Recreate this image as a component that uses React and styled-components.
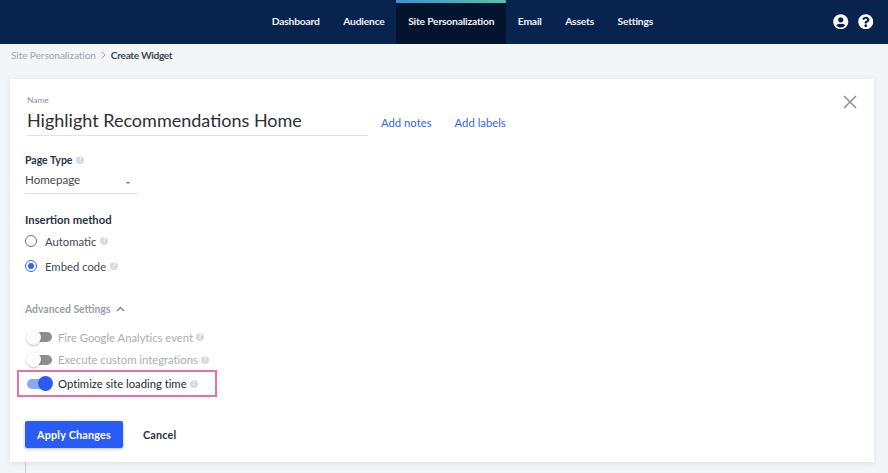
import React from 'react';
import styled, { createGlobalStyle } from 'styled-components';
import { FaUserCircle, FaQuestionCircle } from 'react-icons/fa';

const GlobalStyle = createGlobalStyle`
  html, body {
    margin: 0;
    padding: 0;
    height: 473px;
    overflow: hidden;
    background: #f3f6f9;
    font-family: "Lato", "Liberation Sans", sans-serif;
  }
`;

const Page = styled.div`
  width: 888px;
  height: 473px;
  display: flex;
  flex-direction: column;
  overflow: hidden;
`;

const TopBar = styled.header`
  height: 44px;
  flex: none;
  display: flex;
  align-items: stretch;
  justify-content: space-between;
  background: #08234d;
  padding: 0 15px 0 260px;
  box-sizing: border-box;
`;

const Nav = styled.nav`
  display: flex;
`;

const NavItem = styled.a`
  display: flex;
  align-items: center;
  padding: 0 11.75px 6px;
  box-sizing: border-box;
  font-size: 10.3px;
  font-weight: 700;
  letter-spacing: -0.2px;
  color: #eef1f5;
  border-top: 3px solid transparent;
  background: ${p => (p.$active ? 'linear-gradient(90deg, #3f8fd0, #5cc0a8) top / 100% 3px no-repeat, #03142f' : 'transparent')};
  background-origin: border-box;
  background-clip: border-box;
`;

const IconRow = styled.div`
  display: flex;
  align-items: center;
  gap: 9px;
  padding-bottom: 1px;
  color: #fff;
  font-size: 15.5px;
`;

const Crumbs = styled.div`
  height: 35px;
  flex: none;
  box-sizing: border-box;
  display: flex;
  align-items: center;
  gap: 4px;
  padding: 0 0 13px 11px;
  font-size: 10.2px;
  font-weight: 500;
  letter-spacing: -0.15px;
  color: #a5abb1;
`;

const CrumbSep = styled.svg`
  width: 7px;
  height: 8px;
`;

const CrumbCurrent = styled.span`
  color: #42484e;
  font-weight: 700;
  letter-spacing: -0.35px;
`;

const Card = styled.main`
  flex: none;
  position: relative;
  margin-left: 10px;
  width: 864px;
  height: 383px;
  box-sizing: border-box;
  padding: 16px 0 0 15px;
  background: #fff;
  box-shadow: 0 1px 6px rgba(40, 60, 90, 0.12);
`;

const TrailLine = styled.div`
  width: 1px;
  flex: 1;
  margin-left: 25px;
  background: #c9ced3;
`;

const CloseButton = styled.button`
  position: absolute;
  top: 15px;
  right: 16px;
  width: 16px;
  height: 16px;
  padding: 0;
  border: 0;
  background: none;
  display: flex;
`;

const NameLabel = styled.div`
  font-size: 8.4px;
  color: #8d9399;
  margin-left: 2px;
  height: 10px;
  line-height: 10px;
`;

const NameRow = styled.div`
  display: flex;
  align-items: flex-end;
  gap: 13px;
  margin-top: 2px;
`;

const NameInput = styled.div`
  width: 341px;
  height: 29px;
  margin-left: 2px;
  line-height: 27px;
  box-sizing: border-box;
  border-bottom: 1px solid #e3e1da;
  font-size: 18px;
  color: #2c3034;
`;

const Links = styled.div`
  display: flex;
  gap: 23px;
  padding-bottom: 6px;
`;

const TextLink = styled.a`
  font-size: 11.3px;
  line-height: 14px;
  color: #2f66f2;
`;

const FieldLabel = styled.div`
  display: flex;
  align-items: center;
  gap: 4px;
  height: 14px;
  font-size: ${p => p.$size}px;
  font-weight: 700;
  color: #27333f;
  margin-top: ${p => p.$top}px;
`;

const Hint = styled.span`
  display: inline-flex;
  align-items: center;
  justify-content: center;
  width: 8px;
  height: 8px;
  border-radius: 50%;
  background: #d8dbde;
  color: #fff;
  font-size: 6.5px;
  font-weight: 700;
  line-height: 1;
  margin-left: ${p => p.$gap}px;
`;

const Select = styled.div`
  width: 113px;
  height: 25px;
  margin-top: 2px;
  box-sizing: border-box;
  border-bottom: 1px solid #e3e1da;
  display: flex;
  align-items: center;
  justify-content: space-between;
  padding: 0 8px 3px 0;
  font-size: 11.6px;
  color: #434a50;
`;

const Caret = styled.span`
  width: 0;
  height: 0;
  margin-top: 6px;
  border-left: 2px solid transparent;
  border-right: 2px solid transparent;
  border-top: 2px solid #666c72;
`;

const RadioRow = styled.label`
  display: flex;
  align-items: center;
  gap: 8px;
  height: 16px;
  margin-top: ${p => p.$top}px;
  font-size: 11.3px;
  color: #434a50;
`;

const RadioDot = styled.span`
  width: 12px;
  height: 12px;
  box-sizing: border-box;
  border-radius: 50%;
  border: 1.3px solid ${p => (p.$on ? '#2f66f2' : '#6f7479')};
  display: flex;
  align-items: center;
  justify-content: center;
  &::after {
    content: '';
    width: 6px;
    height: 6px;
    border-radius: 50%;
    background: ${p => (p.$on ? '#2f66f2' : 'transparent')};
  }
`;

const Advanced = styled.div`
  display: flex;
  align-items: center;
  gap: 5px;
  height: 14px;
  margin-top: 28px;
  font-size: 10.4px;
  font-weight: 700;
  color: #9aa0a6;
`;

const ToggleList = styled.div`
  display: flex;
  flex-direction: column;
  margin-top: 10px;
`;

const ToggleRow = styled.div`
  display: flex;
  align-items: center;
  gap: 6px;
  height: 22.5px;
  font-size: 11.3px;
  letter-spacing: -0.02px;
  color: ${p => (p.$on ? '#24292e' : '#a9aeb3')};
  padding-left: 1px;
`;

const HighlightedRow = styled(ToggleRow)`
  width: 200px;
  height: 27px;
  margin: -1px 0 0 -8px;
  box-sizing: border-box;
  border: 2px solid #ec6fa2;
  padding-left: 7px;
`;

const Track = styled.span`
  position: relative;
  width: 25px;
  height: 10px;
  margin-left: 1px;
  border-radius: 5px;
  background: ${p => (p.$on ? '#8aa8f8' : '#8e8e8e')};
`;

const Knob = styled.span`
  position: absolute;
  top: -2.5px;
  left: ${p => (p.$on ? '11px' : '-1px')};
  width: 15px;
  height: 15px;
  border-radius: 50%;
  background: ${p => (p.$on ? '#2a5cf5' : '#fbfbfb')};
  box-shadow: ${p => (p.$on ? 'none' : '0 1px 2px rgba(0, 0, 0, 0.25)')};
`;

const Actions = styled.div`
  display: flex;
  align-items: center;
  gap: 20px;
  margin-top: 24px;
`;

const PrimaryButton = styled.button`
  width: 98px;
  height: 27px;
  border: 0;
  border-radius: 2px;
  background: #2a5cf5;
  color: #fff;
  font: 700 10.8px "Lato", sans-serif;
  letter-spacing: 0.2px;
  box-shadow: 0 1px 3px rgba(30, 60, 150, 0.35);
`;

const CancelButton = styled.button`
  border: 0;
  padding: 0;
  background: none;
  color: #27333f;
  font: 700 10.8px "Lato", sans-serif;
  letter-spacing: 0.2px;
`;

const navItems = ['Dashboard', 'Audience', 'Site Personalization', 'Email', 'Assets', 'Settings'];

const toggles = ['Fire Google Analytics event', 'Execute custom integrations'];

function HintIcon({ gap }) {
  return <Hint $gap={gap}>?</Hint>;
}

export default function App() {
  return (
    <Page>
      <GlobalStyle />
      <TopBar>
        <Nav>
          {navItems.map(item => (
            <NavItem key={item} $active={item === 'Site Personalization'}>{item}</NavItem>
          ))}
        </Nav>
        <IconRow>
          <FaUserCircle />
          <FaQuestionCircle />
        </IconRow>
      </TopBar>

      <Crumbs>
        <span>Site Personalization</span>
        <CrumbSep viewBox="0 0 7 8">
          <path d="M2 1l3 3-3 3" fill="none" stroke="#9aa0a6" strokeWidth="1" />
        </CrumbSep>
        <CrumbCurrent>Create Widget</CrumbCurrent>
      </Crumbs>

      <Card>
        <CloseButton aria-label="Close">
          <svg width="16" height="16" viewBox="0 0 16 16">
            <path d="M2 2l12 12M14 2L2 14" fill="none" stroke="#8a9499" strokeWidth="1.6" />
          </svg>
        </CloseButton>

        <NameLabel>Name</NameLabel>
        <NameRow>
          <NameInput>Highlight Recommendations Home</NameInput>
          <Links>
            <TextLink>Add notes</TextLink>
            <TextLink>Add labels</TextLink>
          </Links>
        </NameRow>

        <FieldLabel $size={10.5} $top={17}>Page Type <HintIcon gap={0} /></FieldLabel>
        <Select>
          Homepage
          <Caret />
        </Select>

        <FieldLabel $size={11.3} $top={18}>Insertion method</FieldLabel>
        <RadioRow $top={7}>
          <RadioDot />
          Automatic
          <HintIcon gap={-4} />
        </RadioRow>
        <RadioRow $top={9}>
          <RadioDot $on />
          Embed code
          <HintIcon gap={-4} />
        </RadioRow>

        <Advanced>
          Advanced Settings
          <svg width="9" height="6" viewBox="0 0 9 6">
            <path d="M1 5l3.5-3.5L8 5" fill="none" stroke="#7d8389" strokeWidth="1.3" />
          </svg>
        </Advanced>

        <ToggleList>
          {toggles.map(label => (
            <ToggleRow key={label}>
              <Track><Knob /></Track>
              {label}
              <HintIcon gap={-3} />
            </ToggleRow>
          ))}
          <HighlightedRow $on>
            <Track $on><Knob $on /></Track>
            Optimize site loading time
            <HintIcon gap={-3} />
          </HighlightedRow>
        </ToggleList>

        <Actions>
          <PrimaryButton>Apply Changes</PrimaryButton>
          <CancelButton>Cancel</CancelButton>
        </Actions>
      </Card>
      <TrailLine />
    </Page>
  );
}
